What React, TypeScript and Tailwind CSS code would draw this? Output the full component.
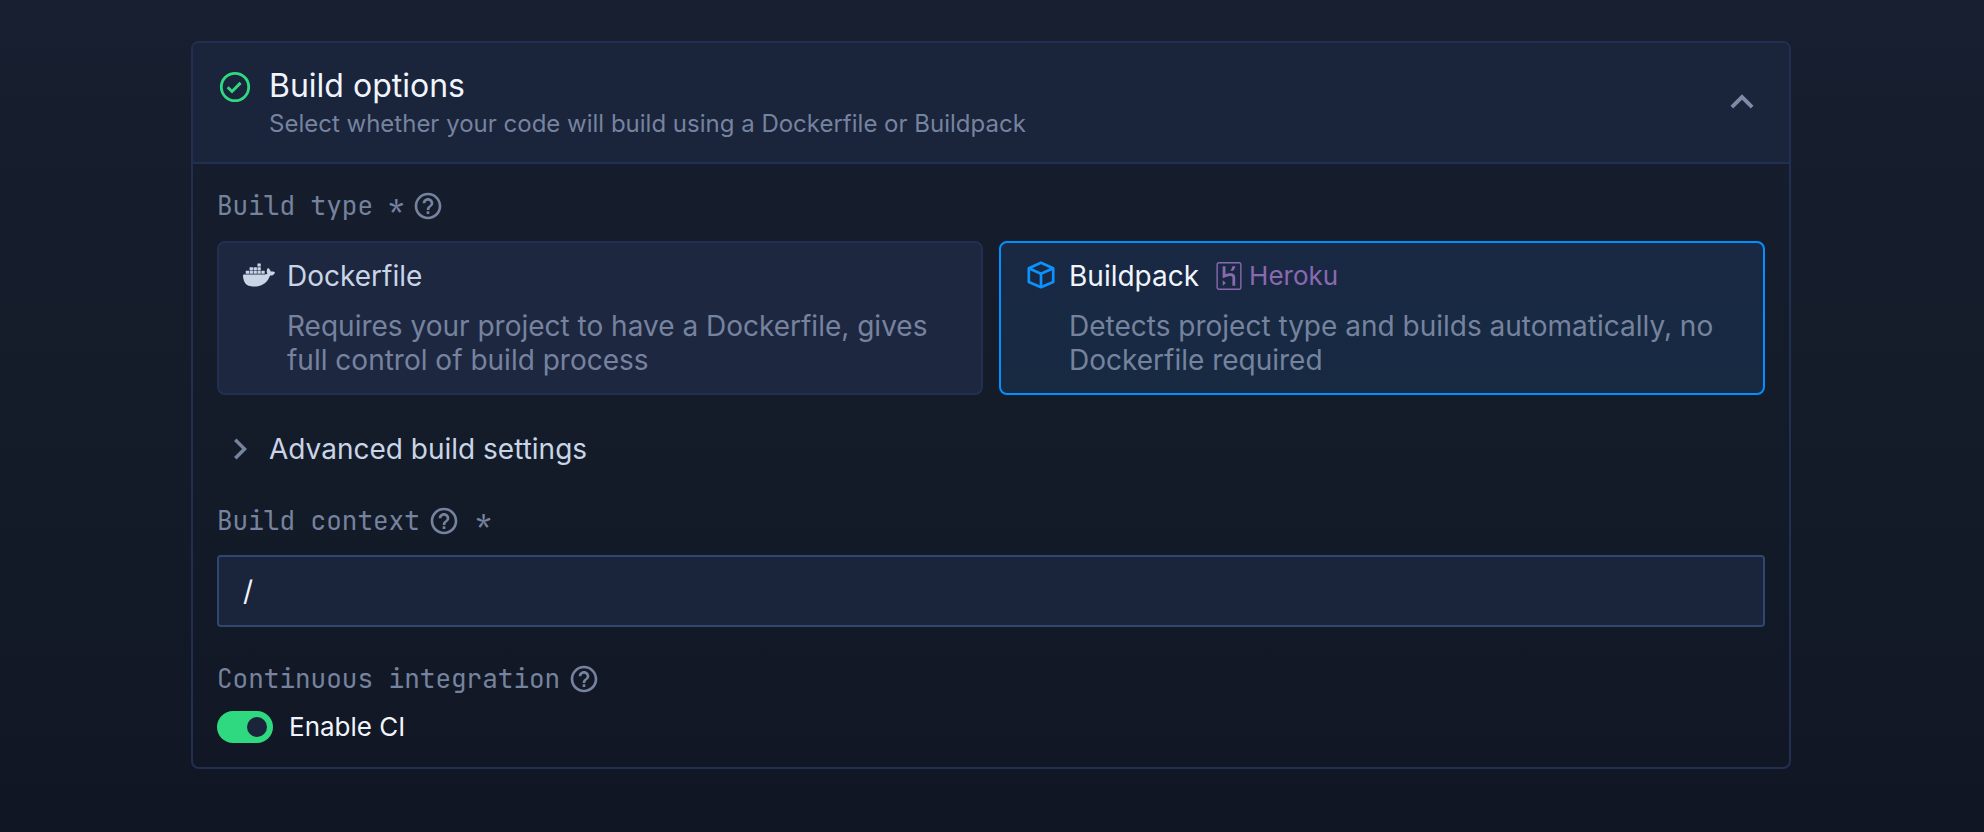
import { useState } from 'react'
import type { ReactNode } from 'react'
import { MdChevronRight, MdExpandLess, MdHelpOutline } from 'react-icons/md'
import { SiDocker, SiHeroku } from 'react-icons/si'

interface BuildOptionProps {
  value: string
  selected: boolean
  onSelect: (value: string) => void
  icon: ReactNode
  title: string
  badge?: ReactNode
  description: string
}

function CheckCircle() {
  return (
    <svg viewBox="0 0 36 36" className="size-9 shrink-0 text-[#2fd97f]" fill="none" stroke="currentColor" aria-hidden="true">
      <circle cx="18" cy="18" r="13.7" strokeWidth="2.8" />
      <path d="M10.7 18.3 15 22.5 23.6 13.9" strokeWidth="3" />
    </svg>
  )
}

function CubeIcon() {
  return (
    <svg
      viewBox="0 0 32 32"
      className="size-8 shrink-0 text-[#0b92ff]"
      fill="none"
      stroke="currentColor"
      strokeWidth="2.7"
      strokeLinejoin="round"
      aria-hidden="true"
    >
      <path d="M16 3.8 28.2 9.2V23L16 28.2 3.8 23V9.2Z" />
      <path d="M3.8 9.2 16 14.8 28.2 9.2M16 14.8V28.2" />
    </svg>
  )
}

function HelpButton({ label }: { label: string }) {
  return (
    <button type="button" aria-label={label} className="text-[#76839f]">
      <MdHelpOutline className="size-8" />
    </button>
  )
}

function FieldHeading({ children }: { children: ReactNode }) {
  return (
    <div className="flex h-9 items-center gap-2 font-['JetBrains_Mono','DejaVu_Sans_Mono',monospace] text-[26px] leading-8 text-[#76839f]">
      {children}
    </div>
  )
}

function BuildOption({ value, selected, onSelect, icon, title, badge, description }: BuildOptionProps) {
  return (
    <label
      className={`relative flex cursor-pointer gap-3 rounded-lg border-2 px-6 py-4 text-[28px] leading-[34px] ${
        selected ? 'border-[#0090ff] bg-linear-to-b from-[#192843] to-[#172a42]' : 'border-[#202f52] bg-[#1e2740]'
      }`}
    >
      <input
        type="radio"
        name="build-type"
        value={value}
        checked={selected}
        onChange={() => onSelect(value)}
        className="sr-only"
      />
      {icon}
      <span className="flex flex-col gap-4">
        <span className="flex items-center gap-4">
          <span className={selected ? 'text-[#f0f4fc]' : 'text-[#c9d5e7]'}>{title}</span>
          {badge}
        </span>
        <span className="text-[#76839f]">{description}</span>
      </span>
    </label>
  )
}

export default function App() {
  const [open, setOpen] = useState(true)
  const [advanced, setAdvanced] = useState(false)
  const [buildType, setBuildType] = useState('buildpack')
  const [context, setContext] = useState('/')
  const [ci, setCi] = useState(true)

  return (
    <main className="min-h-screen bg-linear-to-b from-[#171f30] via-[#131b28] via-60% to-[#111624] pt-[41px] pr-0.5 pb-16 font-['Inter',sans-serif]">
      <section className="mx-auto max-w-[1600px] overflow-hidden rounded-lg border-2 border-[#202f52]">
        <header
          className={`flex items-center justify-between bg-[#1a243b] px-6 pt-6 pb-[19px] ${open ? 'border-b-2 border-[#202f52]' : ''}`}
        >
          <div className="flex items-start gap-4">
            <div className="pt-0.5">
              <CheckCircle />
            </div>
            <div>
              <h2 className="text-[32px] leading-[38px] text-[#f0f4fc]">Build options</h2>
              <p className="text-2xl leading-[38px] text-[#76839f]">
                Select whether your code will build using a Dockerfile or Buildpack
              </p>
            </div>
          </div>
          <button
            type="button"
            aria-label="Toggle build options"
            aria-expanded={open}
            onClick={() => setOpen(!open)}
            className="mb-1.5"
          >
            <MdExpandLess className={`size-[46px] text-[#7f8ba6] ${open ? '' : 'rotate-180'}`} />
          </button>
        </header>

        {open && (
          <div className="px-6 pt-6 pb-[22px]">
            <fieldset>
              <FieldHeading>
                <span>Build type *</span>
                <HelpButton label="About build type" />
              </FieldHeading>
              <div className="mt-[17px] grid grid-cols-2 gap-4">
                <BuildOption
                  value="dockerfile"
                  selected={buildType === 'dockerfile'}
                  onSelect={setBuildType}
                  icon={<SiDocker className="size-8 shrink-0 text-[#c9d5e7]" />}
                  title="Dockerfile"
                  description="Requires your project to have a Dockerfile, gives full control of build process"
                />
                <BuildOption
                  value="buildpack"
                  selected={buildType === 'buildpack'}
                  onSelect={setBuildType}
                  icon={<CubeIcon />}
                  title="Buildpack"
                  badge={
                    <span className="flex items-center gap-1.5 text-[26px] text-[#8b69b0]">
                      <SiHeroku className="size-7" />
                      Heroku
                    </span>
                  }
                  description="Detects project type and builds automatically, no Dockerfile required"
                />
              </div>
            </fieldset>

            <button
              type="button"
              aria-expanded={advanced}
              onClick={() => setAdvanced(!advanced)}
              className="my-9 flex h-9 items-center gap-2 pl-0.5 text-[28px] text-[#c9d5e7]"
            >
              <MdChevronRight className={`size-[42px] text-[#76839f] ${advanced ? 'rotate-90' : ''}`} />
              Advanced build settings
            </button>

            <FieldHeading>
              <label htmlFor="build-context">Build context</label>
              <HelpButton label="About build context" />
              <span className="pl-2">*</span>
            </FieldHeading>
            <input
              id="build-context"
              type="text"
              required
              value={context}
              onChange={(e) => setContext(e.target.value)}
              className="mt-4 mb-[34px] block h-[72px] w-full rounded border-2 border-[#324770] bg-[#1a243b] px-6 text-[28px] text-[#f0f4fc] outline-none"
            />

            <FieldHeading>
              <span>Continuous integration</span>
              <HelpButton label="About continuous integration" />
            </FieldHeading>
            <label className="mt-3 flex h-9 w-fit cursor-pointer items-center gap-4 text-[26px] leading-8 text-[#f0f4fc]">
              <input
                type="checkbox"
                role="switch"
                checked={ci}
                onChange={(e) => setCi(e.target.checked)}
                className="flex h-8 w-14 cursor-pointer appearance-none items-center rounded-full bg-[#324770] px-1.5 before:size-5 before:rounded-full before:bg-[#1a243b] checked:justify-end checked:bg-[#2fd97f]"
              />
              Enable CI
            </label>
          </div>
        )}
      </section>
    </main>
  )
}
